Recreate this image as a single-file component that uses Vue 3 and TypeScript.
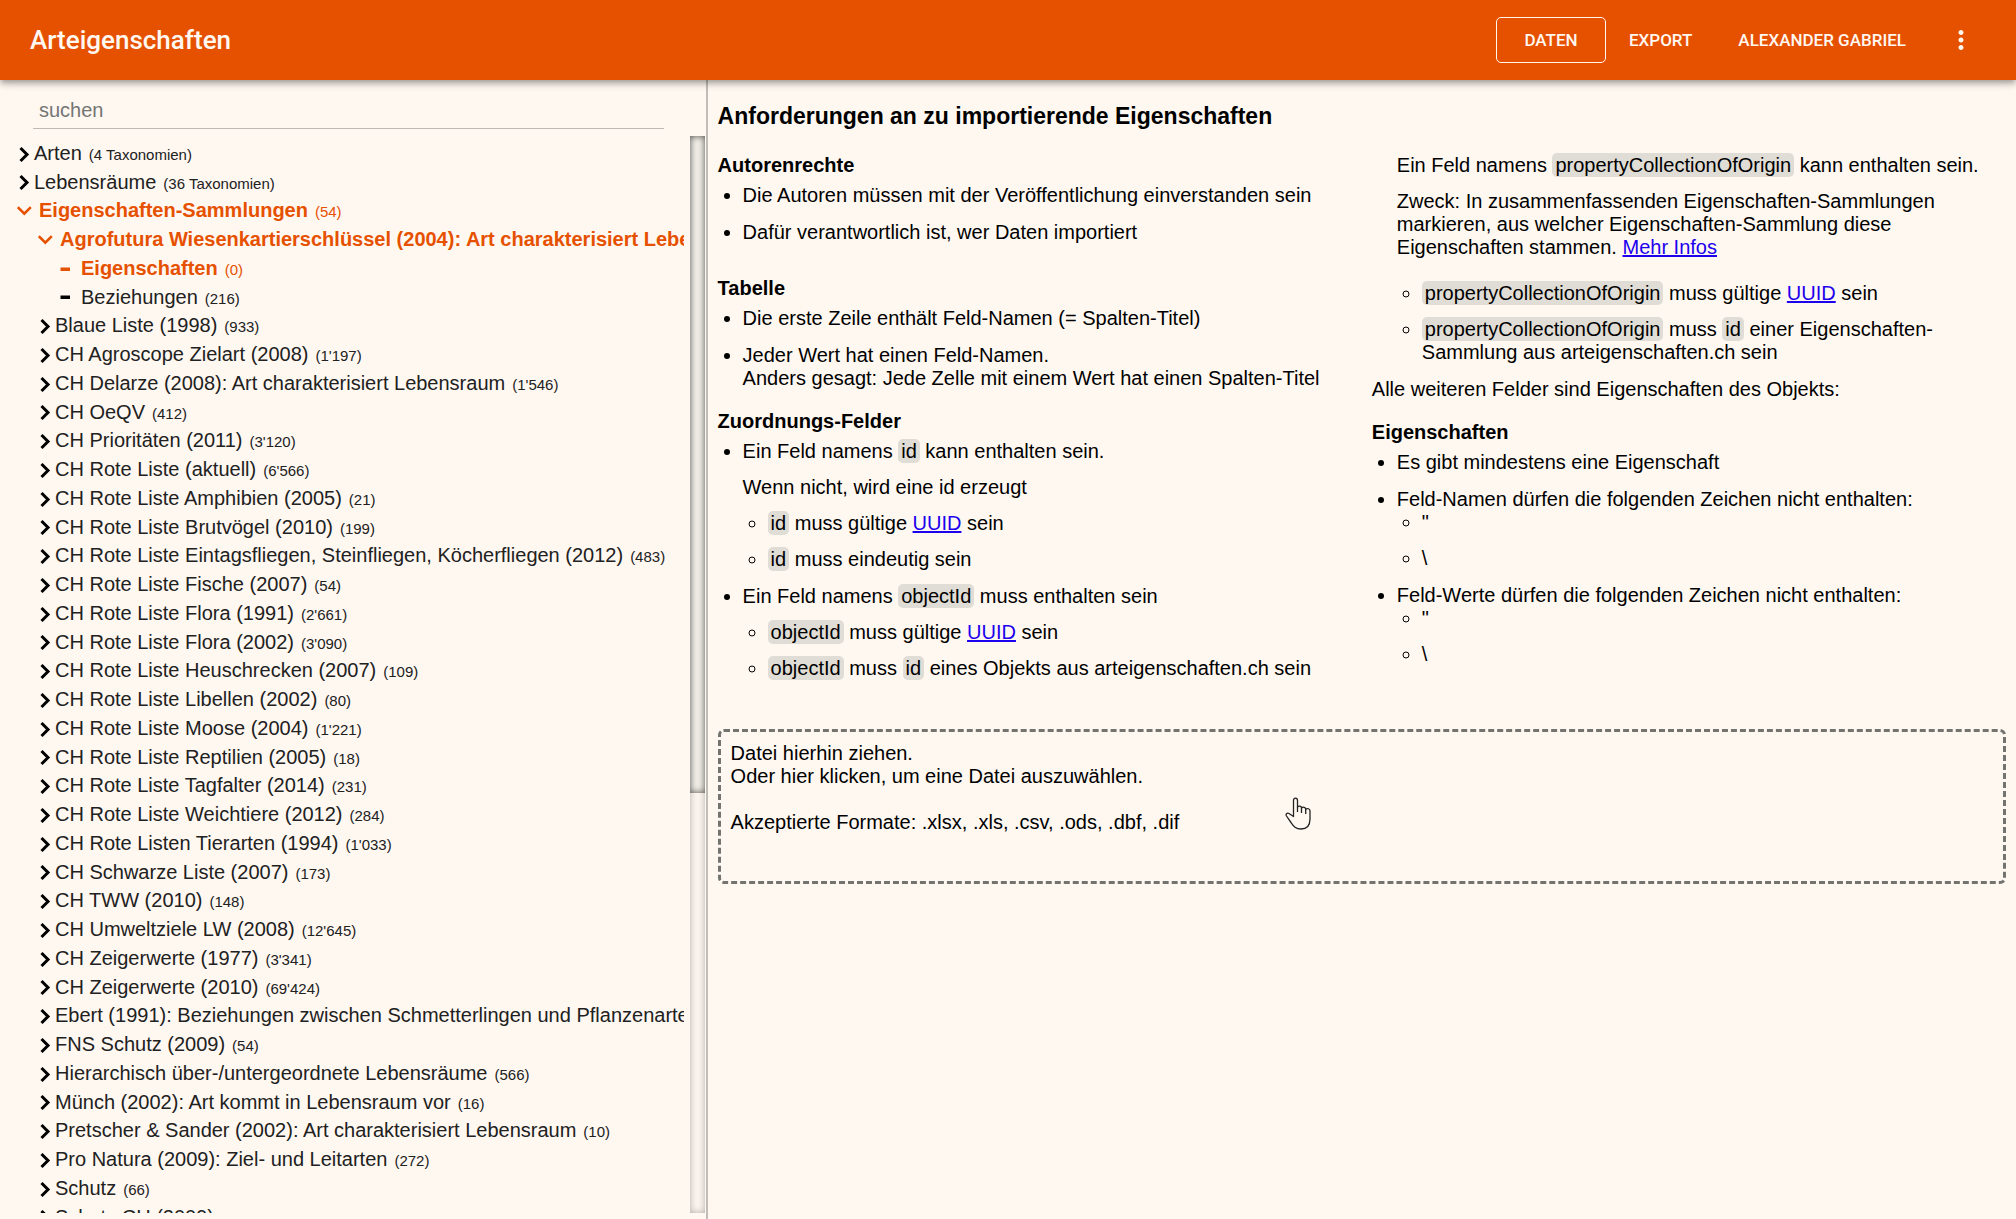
<script setup lang="ts">
import { ref } from 'vue'

type NodeState = 'closed' | 'open' | 'leaf'

interface TreeNode {
  label: string
  info: string
  level: 1 | 2 | 3
  state: NodeState
  active?: boolean
}

const collection = (label: string, info: string): TreeNode => ({ label, info, level: 2, state: 'closed' })

const nodes: TreeNode[] = [
  { label: 'Arten', info: '4 Taxonomien', level: 1, state: 'closed' },
  { label: 'Lebensräume', info: '36 Taxonomien', level: 1, state: 'closed' },
  { label: 'Eigenschaften-Sammlungen', info: '54', level: 1, state: 'open', active: true },
  {
    label: 'Agrofutura Wiesenkartierschlüssel (2004): Art charakterisiert Lebensraum',
    info: '',
    level: 2,
    state: 'open',
    active: true,
  },
  { label: 'Eigenschaften', info: '0', level: 3, state: 'leaf', active: true },
  { label: 'Beziehungen', info: '216', level: 3, state: 'leaf' },
  collection('Blaue Liste (1998)', '933'),
  collection('CH Agroscope Zielart (2008)', "1'197"),
  collection('CH Delarze (2008): Art charakterisiert Lebensraum', "1'546"),
  collection('CH OeQV', '412'),
  collection('CH Prioritäten (2011)', "3'120"),
  collection('CH Rote Liste (aktuell)', "6'566"),
  collection('CH Rote Liste Amphibien (2005)', '21'),
  collection('CH Rote Liste Brutvögel (2010)', '199'),
  collection('CH Rote Liste Eintagsfliegen, Steinfliegen, Köcherfliegen (2012)', '483'),
  collection('CH Rote Liste Fische (2007)', '54'),
  collection('CH Rote Liste Flora (1991)', "2'661"),
  collection('CH Rote Liste Flora (2002)', "3'090"),
  collection('CH Rote Liste Heuschrecken (2007)', '109'),
  collection('CH Rote Liste Libellen (2002)', '80'),
  collection('CH Rote Liste Moose (2004)', "1'221"),
  collection('CH Rote Liste Reptilien (2005)', '18'),
  collection('CH Rote Liste Tagfalter (2014)', '231'),
  collection('CH Rote Liste Weichtiere (2012)', '284'),
  collection('CH Rote Listen Tierarten (1994)', "1'033"),
  collection('CH Schwarze Liste (2007)', '173'),
  collection('CH TWW (2010)', '148'),
  collection('CH Umweltziele LW (2008)', "12'645"),
  collection('CH Zeigerwerte (1977)', "3'341"),
  collection('CH Zeigerwerte (2010)', "69'424"),
  collection('Ebert (1991): Beziehungen zwischen Schmetterlingen und Pflanzenarten', ''),
  collection('FNS Schutz (2009)', '54'),
  collection('Hierarchisch über-/untergeordnete Lebensräume', '566'),
  collection('Münch (2002): Art kommt in Lebensraum vor', '16'),
  collection('Pretscher & Sander (2002): Art charakterisiert Lebensraum', '10'),
  collection('Pro Natura (2009): Ziel- und Leitarten', '272'),
  collection('Schutz', '66'),
  collection('Schutz CH (2009)', ''),
]

const search = ref('')
</script>

<template>
  <div class="app">
    <header class="bar">
      <h1 class="brand">Arteigenschaften</h1>
      <nav class="nav">
        <button type="button" class="nav-btn outlined">DATEN</button>
        <button type="button" class="nav-btn">EXPORT</button>
        <button type="button" class="nav-btn">ALEXANDER GABRIEL</button>
        <button type="button" class="more" aria-label="Mehr">
          <svg width="30" height="30" viewBox="0 0 24 24" aria-hidden="true">
            <path
              fill="currentColor"
              d="M12 8c1.1 0 2-.9 2-2s-.9-2-2-2-2 .9-2 2 .9 2 2 2zm0 2c-1.1 0-2 .9-2 2s.9 2 2 2 2-.9 2-2-.9-2-2-2zm0 6c-1.1 0-2 .9-2 2s.9 2 2 2 2-.9 2-2-.9-2-2-2z"
            />
          </svg>
        </button>
      </nav>
    </header>

    <div class="body">
      <aside class="side">
        <input v-model="search" class="search" type="text" placeholder="suchen" aria-label="suchen" />
        <div class="tree-wrap">
          <ul class="tree">
            <li
              v-for="node in nodes"
              :key="node.label"
              class="node"
              :class="['level-' + node.level, node.state, { active: node.active }]"
            >
              <span class="icon">
                <svg v-if="node.state === 'closed'" width="16" height="18" viewBox="0 0 16 18" aria-hidden="true">
                  <path d="M3.500 3l6.500 6.500-6.500 6.500" fill="none" stroke="currentColor" stroke-width="3" />
                </svg>
                <svg v-else-if="node.state === 'open'" width="16" height="18" viewBox="0 0 16 18" aria-hidden="true">
                  <path d="M.8 5.200l6.500 6.500 6.500-6.500" fill="none" stroke="currentColor" stroke-width="2.600" />
                </svg>
                <svg v-else width="16" height="18" viewBox="0 0 16 18" aria-hidden="true">
                  <path d="M1.500 7.500h9.500v3.500h-9.500z" fill="currentColor" />
                </svg>
              </span>
              <span class="label">{{ node.label }}</span>
              <span v-if="node.info" class="info">({{ node.info }})</span>
            </li>
          </ul>
          <div class="track"><div class="thumb"></div></div>
        </div>
      </aside>

      <main class="main">
        <h2 class="title">Anforderungen an zu importierende Eigenschaften</h2>
        <div class="columns">
          <div class="column">
            <section class="authors">
              <h3>Autorenrechte</h3>
              <ul>
                <li>Die Autoren müssen mit der Veröffentlichung einverstanden sein</li>
                <li>Dafür verantwortlich ist, wer Daten importiert</li>
              </ul>
            </section>
            <section>
              <h3>Tabelle</h3>
              <ul>
                <li>Die erste Zeile enthält Feld-Namen (= Spalten-Titel)</li>
                <li>
                  Jeder Wert hat einen Feld-Namen.<br />Anders gesagt: Jede Zelle mit einem Wert hat einen Spalten-Titel
                </li>
              </ul>
            </section>
            <section>
              <h3>Zuordnungs-Felder</h3>
              <ul>
                <li>
                  <p>Ein Feld namens <code>id</code> kann enthalten sein.</p>
                  <p>Wenn nicht, wird eine id erzeugt</p>
                  <ul>
                    <li><code>id</code> muss gültige <a href="#uuid">UUID</a> sein</li>
                    <li><code>id</code> muss eindeutig sein</li>
                  </ul>
                </li>
                <li>
                  <p>Ein Feld namens <code>objectId</code> muss enthalten sein</p>
                  <ul>
                    <li><code>objectId</code> muss gültige <a href="#uuid">UUID</a> sein</li>
                    <li><code>objectId</code> muss <code>id</code> eines Objekts aus arteigenschaften.ch sein</li>
                  </ul>
                </li>
              </ul>
            </section>
          </div>

          <div class="column">
            <div class="continued">
              <p>Ein Feld namens <code>propertyCollectionOfOrigin</code> kann enthalten sein.</p>
              <p class="purpose">
                Zweck: In zusammenfassenden Eigenschaften-Sammlungen markieren, aus welcher Eigenschaften-Sammlung diese
                Eigenschaften stammen. <a href="#infos">Mehr Infos</a>
              </p>
              <ul class="sub">
                <li><code>propertyCollectionOfOrigin</code> muss gültige <a href="#uuid">UUID</a> sein</li>
                <li>
                  <code>propertyCollectionOfOrigin</code> muss <code>id</code> einer Eigenschaften-Sammlung aus
                  arteigenschaften.ch sein
                </li>
              </ul>
            </div>
            <p class="rest">Alle weiteren Felder sind Eigenschaften des Objekts:</p>
            <section>
              <h3>Eigenschaften</h3>
              <ul>
                <li>Es gibt mindestens eine Eigenschaft</li>
                <li>
                  Feld-Namen dürfen die folgenden Zeichen nicht enthalten:
                  <ul>
                    <li>"</li>
                    <li>\</li>
                  </ul>
                </li>
                <li>
                  Feld-Werte dürfen die folgenden Zeichen nicht enthalten:
                  <ul>
                    <li>"</li>
                    <li>\</li>
                  </ul>
                </li>
              </ul>
            </section>
          </div>
        </div>

        <label class="dropzone">
          <input class="file" type="file" accept=".xlsx,.xls,.csv,.ods,.dbf,.dif" />
          Datei hierhin ziehen.<br />
          Oder hier klicken, um eine Datei auszuwählen.<br /><br />
          Akzeptierte Formate: .xlsx, .xls, .csv, .ods, .dbf, .dif
          <svg class="pointer" width="26" height="33" viewBox="0 0 26 33" aria-hidden="true">
            <path
              d="M8.500 19.500V3.500C8.500 .2 12.500 .2 12.500 3.500V10C14 8.600 16.500 8.800 16.500 11C18 9.700 20.700 10 20.700 12.200C22.300 11 25 11.600 25 14V22C25 28.500 21.500 32 16 32C10.500 32 8.500 29 6 25.500L1.500 19C.3 17 2 15.600 4 16.500Z"
              fill="#fff8f1"
              stroke="#222"
              stroke-width="1.300"
              stroke-linejoin="round"
            />
            <path d="M12.500 10v5M16.500 11v5M20.700 12v5" fill="none" stroke="#222" stroke-width="1.300" />
          </svg>
        </label>
      </main>
    </div>
  </div>
</template>

<style>
body {
  margin: 0;
  background: #fff8f1;
}
</style>

<style scoped>
.app {
  display: flex;
  flex-direction: column;
  height: 100vh;
  overflow: hidden;
  background: #fff8f1;
  color: #000;
  font-family: 'Liberation Sans', Arial, sans-serif;
  font-size: 20px;
  line-height: 23px;
}

.bar {
  position: relative;
  z-index: 1;
  display: flex;
  flex: none;
  align-items: center;
  justify-content: space-between;
  height: 80px;
  box-sizing: border-box;
  padding: 0 25px 0 30px;
  background: #e65100;
  color: #fff8f1;
  font-family: Roboto, sans-serif;
  box-shadow:
    0 3px 5px -1px rgba(0, 0, 0, 0.2),
    0 5px 6px 0 rgba(0, 0, 0, 0.14),
    0 1px 12px 0 rgba(0, 0, 0, 0.12);
}

.brand {
  margin: 0;
  font-size: 26px;
  font-weight: 500;
  line-height: 30px;
}

.nav {
  display: flex;
  align-items: center;
}

.nav-btn,
.more {
  border: 1px solid transparent;
  border-radius: 5px;
  background: none;
  color: inherit;
  font: inherit;
  cursor: pointer;
}

.nav-btn {
  height: 46px;
  padding: 0 22px;
  font-size: 17px;
  font-weight: 500;
}

.outlined {
  min-width: 110px;
  border-color: #fff8f1;
}

.more {
  display: flex;
  justify-content: center;
  width: 60px;
  margin-left: 2px;
  padding: 0;
}

.body {
  display: flex;
  flex: 1;
  min-height: 0;
}

.side {
  display: flex;
  flex: none;
  flex-direction: column;
  width: 35%;
  padding-bottom: 6px;
  border-right: 2px solid #c0bdb8;
}

.search {
  height: 34px;
  margin: 13px 42px 7px 33px;
  box-sizing: content-box;
  padding: 0 6px 1px;
  border: 0;
  border-bottom: 1px solid #bfbab5;
  outline: 0;
  background: none;
  color: inherit;
  font: inherit;
}

.search::placeholder {
  color: #757575;
  opacity: 1;
}

.tree-wrap {
  display: flex;
  flex: 1;
  min-height: 0;
  padding-right: 1px;
}

.tree {
  flex: 1;
  min-width: 0;
  margin: 0 6px 0 0;
  padding: 3px 0 0;
  overflow: hidden;
  list-style: none;
  color: #212121;
}

.node {
  display: flex;
  height: 29px;
  padding-left: 17px;
  line-height: 29px;
  white-space: nowrap;
}

.node:nth-child(4n + 2) {
  height: 28px;
}

.level-2 {
  padding-left: 38px;
}

.level-3 {
  padding-left: 59px;
}

.icon {
  display: flex;
  flex: none;
  align-items: center;
  width: 22px;
  color: #000;
}

.closed .icon {
  width: 17px;
}

.active .icon,
.active {
  color: #e65100;
}

.active .label {
  font-weight: 700;
}

.info {
  margin-left: 7px;
  font-size: 15px;
  line-height: 31px;
}

.track {
  flex: none;
  width: 15px;
  background: #fbf5ee;
  box-shadow: inset 0 0 7px rgba(0, 0, 0, 0.3);
}

.thumb {
  height: 61%;
  background: #f3efe8;
  box-shadow: inset 0 0 7px rgba(0, 0, 0, 0.7);
}

.main {
  flex: 1;
  min-width: 0;
  padding: 23px 10px 0;
}

.title {
  margin: 0;
  font-size: 23px;
  line-height: 26px;
}

.columns {
  display: grid;
  grid-template-columns: 1fr 1fr;
  gap: 20px;
  margin-top: 25px;
}

h3 {
  margin: 0 0 7px;
  font-size: 20px;
  line-height: 23px;
}

ul {
  margin: 0;
  padding-left: 25px;
}

p {
  margin: 0 0 13px;
}

.column li {
  margin-bottom: 14px;
}

.column li li,
.column .sub li {
  margin-bottom: 13px;
}

.column li:last-child {
  margin-bottom: 0;
}

.sub {
  list-style: circle;
}

section + section {
  margin-top: 20px;
}

.authors {
  padding-bottom: 13px;
}

.continued {
  padding-left: 25px;
}

.sub li:last-child {
  margin-bottom: 0;
}

.purpose {
  margin-bottom: 23px;
}

.rest {
  margin: 14px 0 20px;
}

code {
  padding: 1px 3px;
  border-radius: 5px;
  background: #e0ddd6;
  font: inherit;
}

a {
  color: #1c00ee;
  text-decoration-thickness: 2px;
}

.dropzone {
  position: relative;
  display: block;
  min-height: 155px;
  box-sizing: border-box;
  margin-top: 49px;
  padding: 10px;
  border: 3px dashed #737370;
  border-radius: 6px;
  cursor: pointer;
}

.file {
  position: absolute;
  width: 1px;
  height: 1px;
  opacity: 0;
}

.pointer {
  position: absolute;
  top: 65px;
  left: 44%;
}
</style>
